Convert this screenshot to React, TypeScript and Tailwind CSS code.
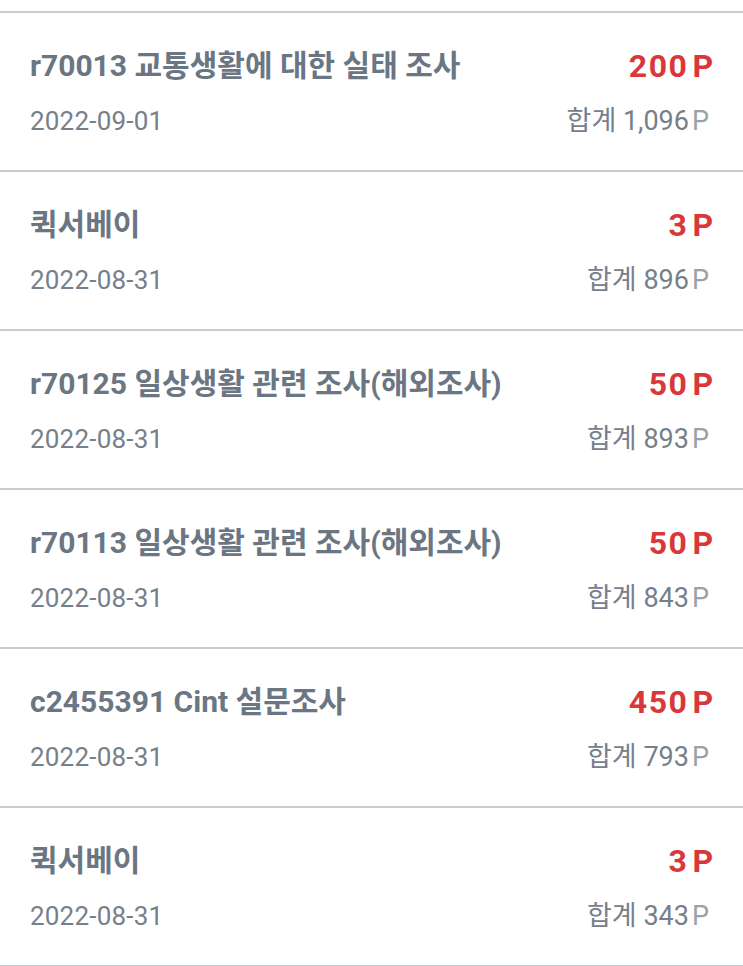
import React from 'react';

type Entry = {
    title: string;
    date: string;
    points: string;
    total: string;
};

const entries: Entry[] = [
    { title: 'r70013 교통생활에 대한 실태 조사', date: '2022-09-01', points: '200', total: '1,096' },
    { title: '퀵서베이', date: '2022-08-31', points: '3', total: '896' },
    { title: 'r70125 일상생활 관련 조사(해외조사)', date: '2022-08-31', points: '50', total: '893' },
    { title: 'r70113 일상생활 관련 조사(해외조사)', date: '2022-08-31', points: '50', total: '843' },
    { title: 'c2455391 Cint 설문조사', date: '2022-08-31', points: '450', total: '793' },
    { title: '퀵서베이', date: '2022-08-31', points: '3', total: '343' },
];

const PointRow: React.FC<{ entry: Entry }> = ({ entry }) => (
    <div className="h-[159px] border-b-2 border-[#c9cccf] px-[30px] pt-[35px]">
        <div className="flex items-center justify-between h-[36px]">
            <span className="text-[30px] font-bold text-[#6b7683] leading-[36px]">
                {entry.title}
            </span>
            <span className="text-[32px] font-bold text-[#d9383a] leading-[36px]">
                <span className="tracking-[1.5px]">{entry.points}</span>
                <span className="ml-[4px]">P</span>
            </span>
        </div>
        <div className="flex items-center justify-between h-[32px] mt-[21px]">
            <span className="text-[26px] text-[#76808b] leading-[32px] tracking-[0.2px]">{entry.date}</span>
            <span className="text-[27px] text-[#76808b] leading-[32px] pr-[4px]">
                합계 {entry.total}
                <span className="ml-[3px] text-[#9aa1a8]">P</span>
            </span>
        </div>
    </div>
);

export default function App() {
    return (
        <div
            className="w-[743px] h-[966px] overflow-hidden bg-white"
            style={{ fontFamily: "Roboto, 'Noto Sans CJK KR', sans-serif" }}
        >
            <div className="h-[11px]" />
            <div className="border-t-2 border-[#c9cccf]">
                {entries.map((entry, idx) => (
                    <PointRow key={idx} entry={entry} />
                ))}
            </div>
        </div>
    );
}
